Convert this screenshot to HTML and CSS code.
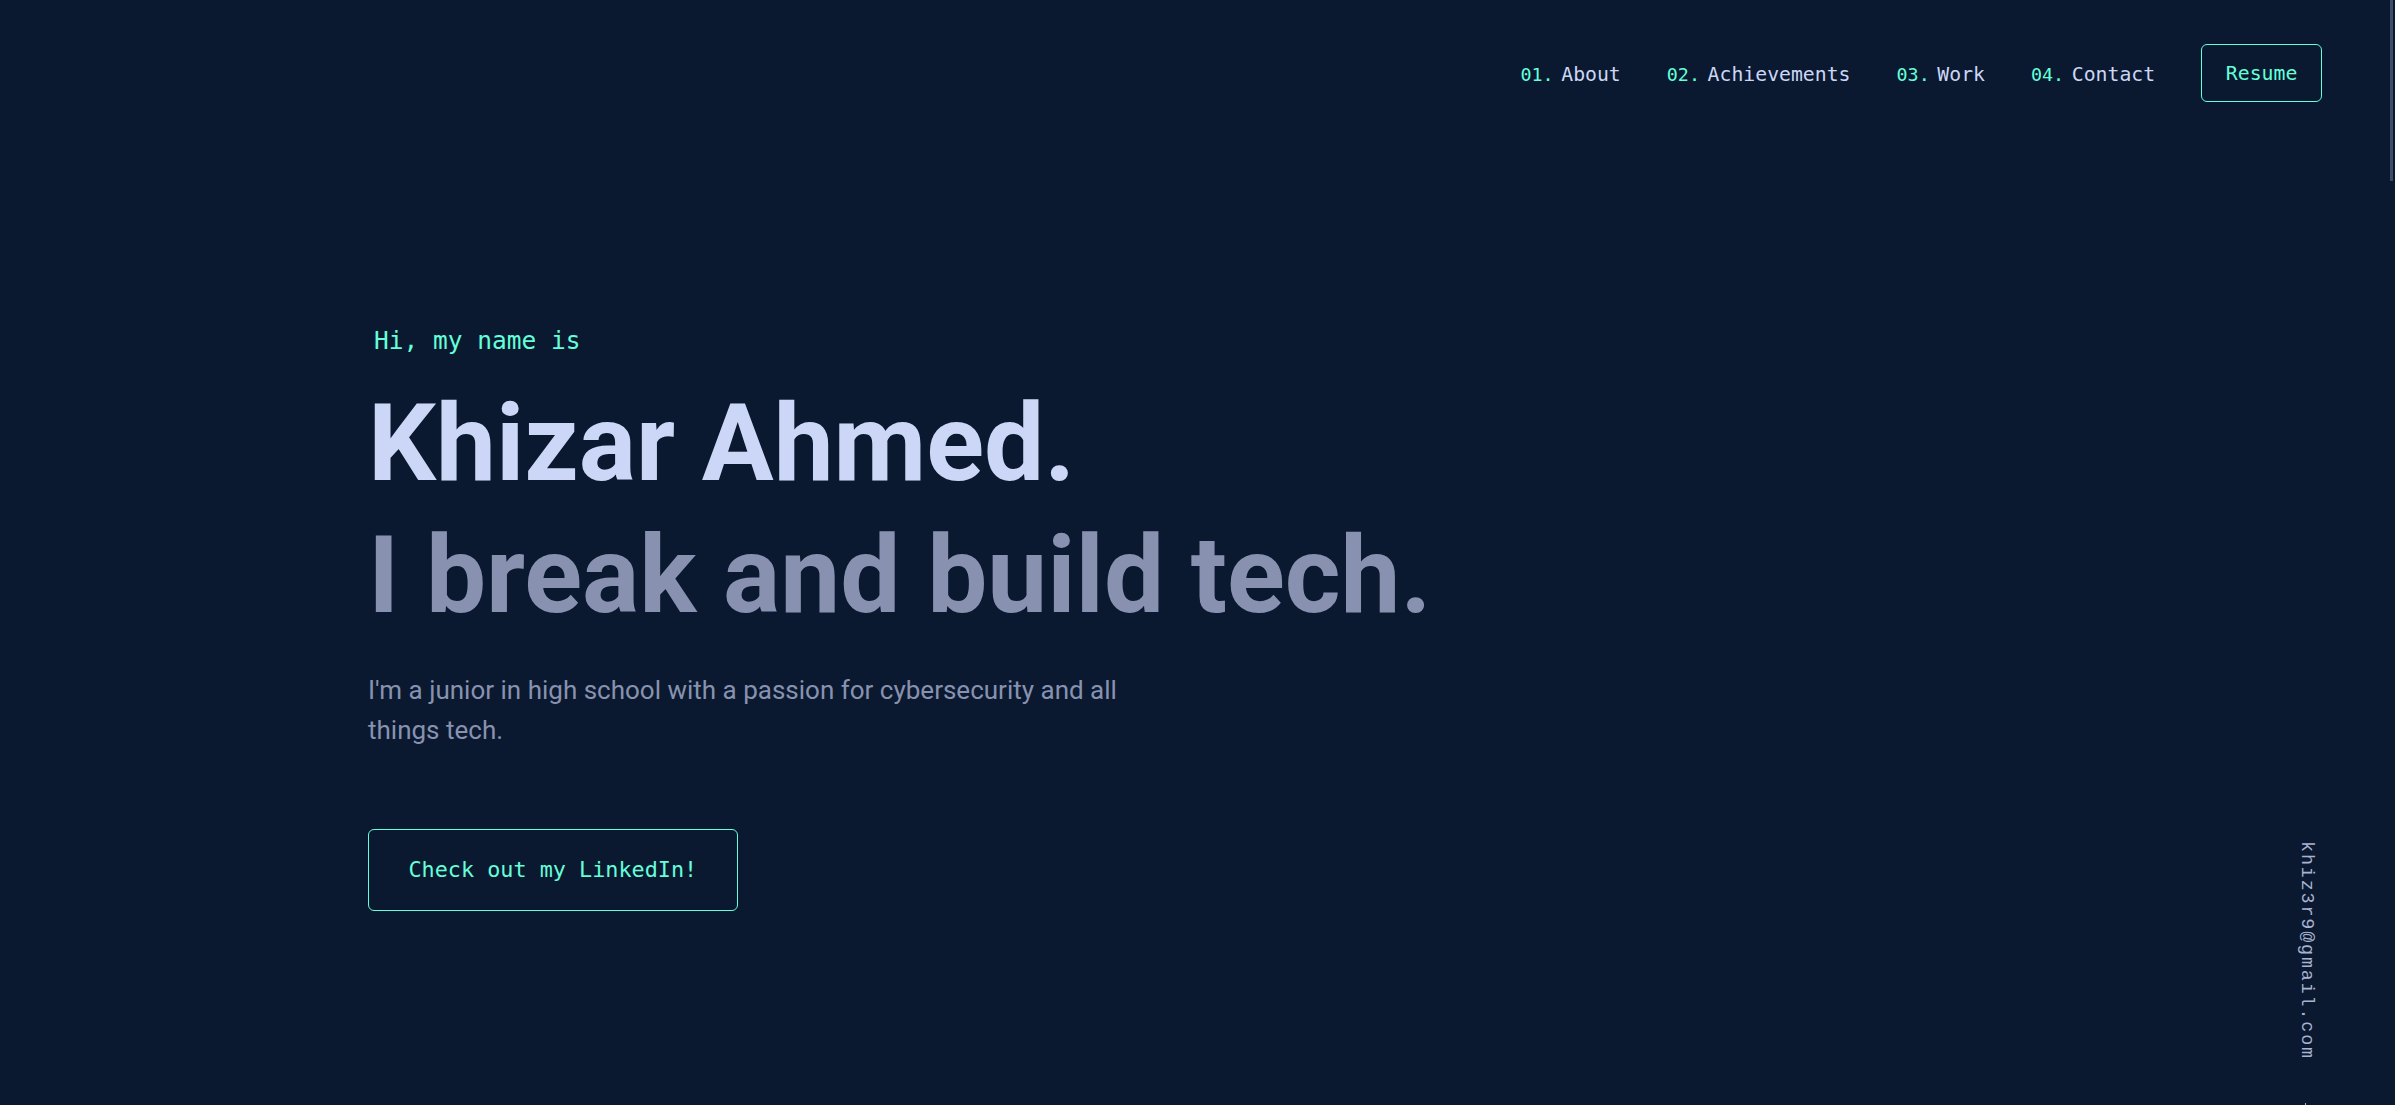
FILE: index.html
```html
<!DOCTYPE html>
<html lang="en">
<head>
<meta charset="utf-8">
<title>Khizar Ahmed</title>
<link rel="stylesheet" href="styles.css">
</head>
<body>
<header class="nav">
  <nav class="nav-inner">
    <ol class="nav-list">
      <li><a class="nav-link"><span class="num">01.</span>About</a></li>
      <li><a class="nav-link"><span class="num">02.</span>Achievements</a></li>
      <li><a class="nav-link"><span class="num">03.</span>Work</a></li>
      <li><a class="nav-link"><span class="num">04.</span>Contact</a></li>
    </ol>
    <a class="resume">Resume</a>
  </nav>
</header>
<main class="main">
  <section class="hero">
    <h1 class="hi">Hi, my name is</h1>
    <h2 class="name">Khizar Ahmed.</h2>
    <h3 class="tag">I break and build tech.</h3>
    <p class="intro">I'm a junior in high school with a passion for cybersecurity and all things tech.</p>
    <a class="cta">Check out my LinkedIn!</a>
  </section>
</main>
<div class="side-email">
  <a class="email">khiz3r9@gmail.com</a>
  <span class="side-line"></span>
</div>
<div class="scroll-thumb"></div>
</body>
</html>
```

FILE: styles.css
```css
html, body {
  margin: 0;
  padding: 0;
}
body {
  background: #0a192f;
  color: #8892b0;
  height: 1105px;
  overflow: hidden;
  position: relative;
  font-family: Roboto, "Liberation Sans", sans-serif;
}
a { text-decoration: none; }

.nav {
  height: 146px;
  display: flex;
  justify-content: flex-end;
  align-items: center;
  padding: 0 73px;
}
.nav-inner {
  display: flex;
  align-items: center;
  gap: 46px;
}
.nav-list {
  display: flex;
  gap: 46px;
  list-style: none;
  margin: 0;
  padding: 3px 0 0;
}
.nav-link {
  font-family: "DejaVu Sans Mono", monospace;
  font-size: 19.8px;
  color: #ccd6f6;
  line-height: 22px;
}
.num {
  color: #64ffda;
  font-size: 18.4px;
  margin-right: 7.6px;
}
.resume {
  font-family: "DejaVu Sans Mono", monospace;
  font-size: 19.8px;
  line-height: 21px;
  color: #64ffda;
  border: 1px solid #64ffda;
  border-radius: 6px;
  padding: 17.5px 23.7px;
}

.main {
  padding-left: 368px;
}
.hero {
  padding-top: 180px;
}
.hi {
  margin: 0 0 29px 6px;
  font-family: "DejaVu Sans Mono", monospace;
  font-weight: 400;
  font-size: 24.5px;
  line-height: 30px;
  color: #64ffda;
}
.name, .tag {
  margin: 0;
  font-family: Roboto, "Liberation Sans", sans-serif;
  font-weight: 700;
  font-size: 107px;
  line-height: 118px;
}
.name {
  color: #ccd6f6;
}
.tag {
  margin-top: 14px;
  color: #8892b0;
}
.intro {
  margin: 35px 0 0;
  max-width: 790px;
  font-size: 26px;
  line-height: 40px;
  color: #8892b0;
}
.cta {
  display: inline-block;
  margin-top: 79px;
  font-family: "DejaVu Sans Mono", monospace;
  font-size: 21.8px;
  line-height: 22px;
  color: #64ffda;
  border: 1px solid #64ffda;
  border-radius: 6px;
  padding: 29px 39.5px;
}

.side-email {
  position: absolute;
  top: 826px;
  left: 2275px;
  width: 61px;
  display: flex;
  flex-direction: column;
  align-items: center;
}
.email {
  writing-mode: vertical-rl;
  font-family: "Liberation Mono", monospace;
  font-size: 18.4px;
  letter-spacing: 1.84px;
  line-height: 18px;
  color: #a8b2d1;
  padding: 15px 0;
}
.side-line {
  display: block;
  width: 1px;
  height: 138px;
  margin-top: 28px;
  background: #a8b2d1;
}
.scroll-thumb {
  position: absolute;
  top: 0;
  right: 2px;
  width: 3px;
  height: 181px;
  background: #3e4c68;
}
```
